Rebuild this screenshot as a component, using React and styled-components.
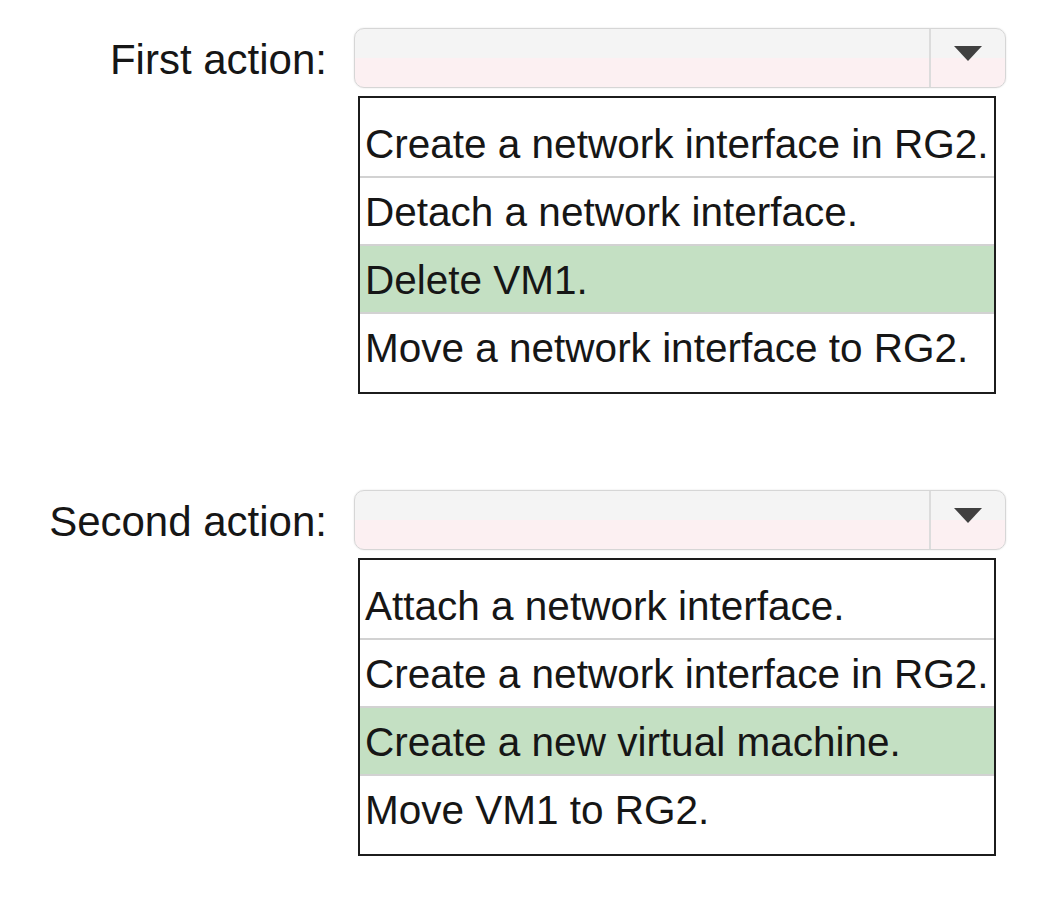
import React from 'react'
import styled, { createGlobalStyle } from 'styled-components'

const GlobalStyle = createGlobalStyle`
  html, body {
    margin: 0;
    background: #fff;
  }
  body {
    font-family: "Liberation Sans", Arial, sans-serif;
    color: #161616;
  }
`

const Page = styled.div`
  display: flex;
  flex-direction: column;
  gap: 96px;
  width: 1044px;
  padding: 28px 0 40px;
`

const Question = styled.section`
  display: grid;
  grid-template-columns: 327px 652px;
  column-gap: 27px;
  row-gap: 6px;
`

const Label = styled.div`
  font-size: 42px;
  line-height: 60px;
  padding-top: 2px;
  text-align: right;
  white-space: nowrap;
`

const Select = styled.div`
  display: flex;
  height: 60px;
  box-sizing: border-box;
  border: 1px solid #d6d6d6;
  border-radius: 10px;
  background: linear-gradient(#f4f4f4 0 50%, #fcf0f2 50% 100%);
  box-shadow: 0 0 2px rgba(0, 0, 0, 0.12);
`

const Field = styled.div`
  flex: 1;
`

const Toggle = styled.div`
  display: flex;
  justify-content: center;
  width: 76px;
  box-sizing: border-box;
  padding-top: 17px;
  border-left: 2px solid #dcdcdc;
`

const List = styled.ul`
  grid-column: 2;
  margin: 0 10px 0 4px;
  padding: 12px 0 10px;
  list-style: none;
  border: 2px solid #1c1c1c;
  background: #fff;
`

const Option = styled.li`
  height: 68px;
  box-sizing: border-box;
  padding: 14px 0 0 5px;
  font-size: 40.5px;
  line-height: 41px;
  white-space: nowrap;
  overflow: hidden;
  background: ${p => (p.$selected ? '#c4e0c3' : 'transparent')};
  border-bottom: 2px solid #d2d2d2;

  &:last-child {
    border-bottom: none;
  }
`

const Arrow = () => (
  <svg width="28" height="15" viewBox="0 0 28 15">
    <polygon points="0,0 28,0 14,15" fill="#404040" />
  </svg>
)

const questions = [
  {
    label: 'First action:',
    options: [
      'Create a network interface in RG2.',
      'Detach a network interface.',
      'Delete VM1.',
      'Move a network interface to RG2.',
    ],
    selected: 2,
  },
  {
    label: 'Second action:',
    options: [
      'Attach a network interface.',
      'Create a network interface in RG2.',
      'Create a new virtual machine.',
      'Move VM1 to RG2.',
    ],
    selected: 2,
  },
]

export default function App() {
  return (
    <>
      <GlobalStyle />
      <Page>
        {questions.map(q => (
          <Question key={q.label}>
            <Label>{q.label}</Label>
            <Select>
              <Field />
              <Toggle>
                <Arrow />
              </Toggle>
            </Select>
            <List>
              {q.options.map((opt, i) => (
                <Option key={opt} $selected={i === q.selected}>
                  {opt}
                </Option>
              ))}
            </List>
          </Question>
        ))}
      </Page>
    </>
  )
}
